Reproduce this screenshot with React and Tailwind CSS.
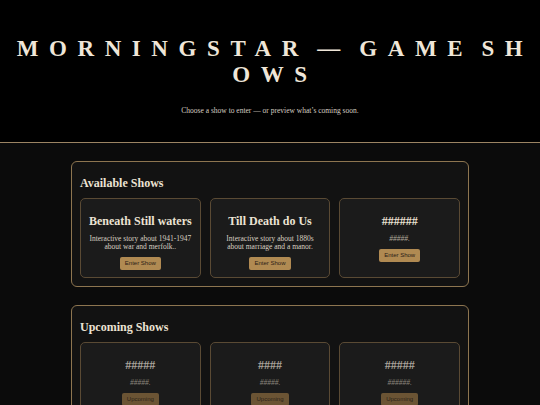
import React from "react";

const serif = "font-['Liberation_Serif',Georgia,serif]";
const sans = "font-['Liberation_Sans',Arial,sans-serif]";

const available = [
  { title: "Beneath Still waters", text: "Interactive story about 1941-1947 about war and merfolk.." },
  { title: "Till Death do Us", text: "Interactive story about 1880s about marriage and a manor." },
  { title: "######", text: "#####." },
];

const upcoming = [
  { title: "#####", text: "#####." },
  { title: "####", text: "#####." },
  { title: "#####", text: "######." },
];

const ShowCard = ({ show, soon }) => (
  <div className="flex flex-col items-center rounded-[5px] border border-[#5a4a34] bg-[#1b1b1b] px-[8px] pb-[7px] pt-[15px] text-center">
    <h3 className={`text-[12px] font-bold leading-[15px] ${soon ? "text-[#aaa49b]" : "text-[#ece3d4]"}`}>
      {show.title}
    </h3>
    <p
      className={`mt-[6px] text-[7.5px] leading-[8px] ${
        soon ? "italic text-[#8c867d]" : show.text.startsWith("#") ? "italic text-[#b3ab9e]" : "text-[#d9d0c2]"
      }`}
    >
      {show.text}
    </p>
    <button
      className={`${sans} mt-[6px] h-[13px] rounded-[2px] px-[5px] text-[6px] font-medium leading-[13px] ${
        soon ? "bg-[#6b5434] text-[#2b2217]" : "bg-[#b08a52] text-[#2a2016]"
      }`}
    >
      {soon ? "Upcoming" : "Enter Show"}
    </button>
  </div>
);

const Section = ({ title, shows, soon }) => (
  <section className="rounded-[6px] border border-[#8d7550] bg-[#121212] px-[8px] pb-[8px] pt-[14px]">
    <h2 className="mb-[7px] text-[12px] font-bold leading-[15px] text-[#ece3d4]">{title}</h2>
    <div className="grid grid-cols-3 gap-[9px]">
      {shows.map((s, i) => (
        <ShowCard key={i} show={s} soon={soon} />
      ))}
    </div>
  </section>
);

export default function App() {
  return (
    <div className={`${serif} min-h-screen bg-[#0b0b0b]`}>
      <header className="border-b border-[#9c8463] bg-black pb-[26px] pt-[36px] text-center">
        <h1 className="break-all pl-[14px] pr-[4px] text-[23px] font-bold uppercase leading-[26px] tracking-[0.46em] text-[#efe6d8] [word-spacing:-8px]">
          Morningstar — Game Shows
        </h1>
        <p className="mt-[18px] px-[16px] text-[7.5px] leading-[10px] text-[#d6cec2]">
          Choose a show to enter — or preview what’s coming soon.
        </p>
      </header>
      <main className="mx-auto flex max-w-[398px] flex-col gap-[18px] pt-[18px]">
        <Section title="Available Shows" shows={available} />
        <Section title="Upcoming Shows" shows={upcoming} soon />
      </main>
    </div>
  );
}
